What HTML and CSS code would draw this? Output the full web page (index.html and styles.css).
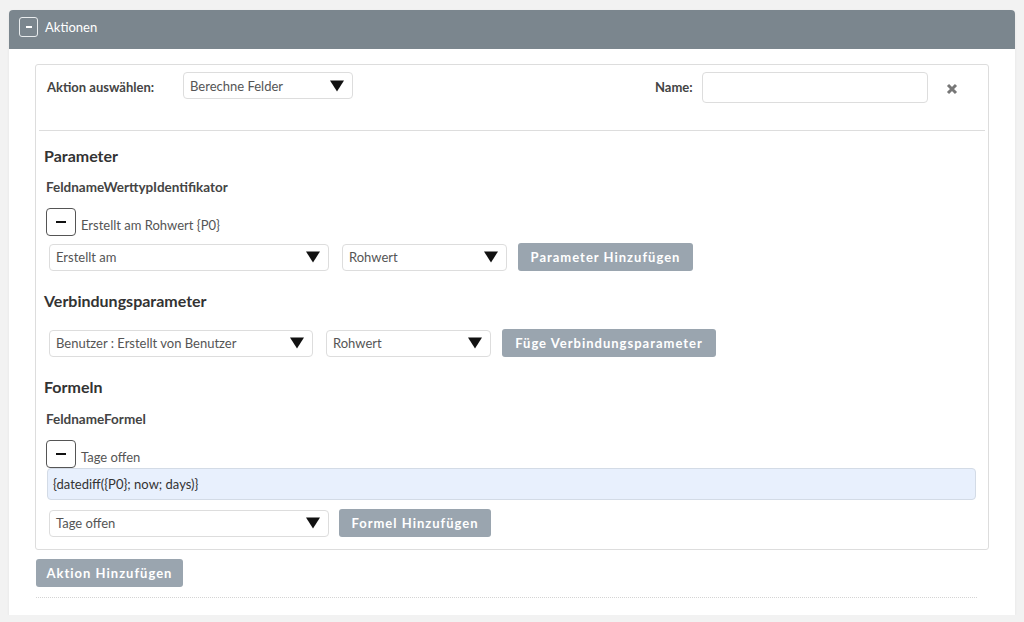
FILE: index.html
```html
<!DOCTYPE html>
<html lang="de">
<head>
<meta charset="utf-8">
<title>Aktionen</title>
<link rel="stylesheet" href="styles.css">
</head>
<body>
<div class="panel">
  <div class="panel-head">
    <span class="toggle"><span class="toggle-bar"></span></span>
    <span class="panel-title">Aktionen</span>
  </div>
  <div class="panel-body">
    <div class="card">
      <div class="toprow">
        <span class="lbl lbl-action">Aktion auswählen:</span>
        <div class="select sel-action"><span>Berechne Felder</span><svg class="arrow" viewBox="0 0 14 11"><path d="M0 0H14L7 11Z"/></svg></div>
        <span class="lbl lbl-name">Name:</span>
        <div class="input-name"></div>
        <svg class="close" viewBox="0 0 12 12"><path d="M2 2L10 10M10 2L2 10"/></svg>
      </div>

      <div class="content">
        <h2 class="heading h-param">Parameter</h2>
        <div class="subhead">FeldnameWerttypIdentifikator</div>
        <div class="minus-row">
          <span class="minus-btn"><span class="minus-bar"></span></span>
          <span class="minus-label">Erstellt am Rohwert {P0}</span>
        </div>
        <div class="field-row row-param">
          <div class="select w280"><span>Erstellt am</span><svg class="arrow" viewBox="0 0 14 11"><path d="M0 0H14L7 11Z"/></svg></div>
          <div class="select w165"><span>Rohwert</span><svg class="arrow" viewBox="0 0 14 11"><path d="M0 0H14L7 11Z"/></svg></div>
          <button class="btn btn-param">Parameter Hinzufügen</button>
        </div>

        <h2 class="heading h-verb">Verbindungsparameter</h2>
        <div class="field-row row-verb">
          <div class="select w264"><span>Benutzer : Erstellt von Benutzer</span><svg class="arrow" viewBox="0 0 14 11"><path d="M0 0H14L7 11Z"/></svg></div>
          <div class="select w165"><span>Rohwert</span><svg class="arrow" viewBox="0 0 14 11"><path d="M0 0H14L7 11Z"/></svg></div>
          <button class="btn btn-verb">Füge Verbindungsparameter</button>
        </div>

        <h2 class="heading h-form">Formeln</h2>
        <div class="subhead sub-form">FeldnameFormel</div>
        <div class="minus-row minus-form">
          <span class="minus-btn"><span class="minus-bar"></span></span>
          <span class="minus-label">Tage offen</span>
        </div>
        <div class="formula">{datediff({P0}; now; days)}</div>
        <div class="field-row row-form">
          <div class="select w280"><span>Tage offen</span><svg class="arrow" viewBox="0 0 14 11"><path d="M0 0H14L7 11Z"/></svg></div>
          <button class="btn btn-form">Formel Hinzufügen</button>
        </div>
      </div>
    </div>
    <button class="btn btn-add">Aktion Hinzufügen</button>
    <div class="dotted"></div>
  </div>
</div>
</body>
</html>
```

FILE: styles.css
```css
* { box-sizing: border-box; }

html, body {
  margin: 0;
  padding: 0;
  background: #f2f2f2;
  font-family: Lato, "Open Sans", "Liberation Sans", sans-serif;
  color: #444;
}

body {
  padding: 10px 9px 0 9px;
}

.panel {
  background: #fff;
  border-radius: 4px 4px 0 0;
  box-shadow: 0 1px 3px rgba(0,0,0,0.06);
  height: 605px;
}

.panel-head {
  height: 39px;
  background: #7b868e;
  border-radius: 4px 4px 0 0;
  display: flex;
  align-items: center;
  padding: 0 0 5px 10px;
}

.toggle {
  width: 19px;
  height: 20px;
  border: 1px solid #e9ecee;
  border-radius: 3px;
  display: flex;
  align-items: center;
  justify-content: center;
}

.toggle-bar {
  width: 6px;
  height: 1.5px;
  background: #fff;
}

.panel-title {
  color: #fff;
  font-size: 13px;
  margin-left: 7px;
}

.panel-body {
  padding: 15px 26px 0 26px;
}

.card {
  border: 1px solid #ddd;
  border-radius: 3px;
  padding: 0 3px 12px 3px;
}

.toprow {
  display: flex;
  align-items: flex-start;
  height: 66px;
  padding: 7px 0 0 8px;
  border-bottom: 1px solid #ddd;
}

.lbl {
  font-size: 13px;
  font-weight: bold;
  color: #444;
  line-height: 31px;
  white-space: nowrap;
}

.lbl-action { width: 136px; }

.lbl-name { margin-left: 302px; width: 47px; }

.select {
  height: 27px;
  border: 1px solid #ddd;
  border-radius: 4px;
  background: #fff;
  display: flex;
  align-items: center;
  justify-content: space-between;
  padding: 0 8px 0 6px;
  font-size: 13px;
  color: #555;
  flex: none;
}

.arrow {
  width: 14px;
  height: 12px;
  fill: #111;
  flex: none;
}

.sel-action { width: 170px; }

.input-name {
  width: 226px;
  height: 31px;
  border: 1px solid #ddd;
  border-radius: 4px;
  background: #fff;
}

.close {
  width: 12px;
  height: 12px;
  margin: 11px 0 0 18px;
  stroke: #777;
  stroke-width: 3;
  stroke-linecap: butt;
  fill: none;
}

.content {
  padding: 0 9px 0 5px;
}

.heading {
  font-size: 16px;
  font-weight: bold;
  color: #333;
  line-height: 20px;
  margin: 0;
}

.h-param { margin-top: 15px; }
.h-verb { margin-top: 20px; }
.h-form { margin-top: 20px; }

.subhead {
  font-size: 13.5px;
  font-weight: bold;
  color: #444;
  line-height: 18px;
  margin: 12px 0 0 2px;
}

.sub-form { margin-top: 13px; }

.minus-row {
  display: flex;
  align-items: flex-end;
  margin: 12px 0 0 2px;
}

.minus-form { margin-top: 12px; }

.minus-btn {
  width: 30px;
  height: 28px;
  border: 1px solid #555;
  border-radius: 4px;
  display: flex;
  align-items: center;
  justify-content: center;
  background: #fff;
}

.minus-bar {
  width: 10px;
  height: 2px;
  background: #111;
}

.minus-label {
  font-size: 13px;
  color: #555;
  margin-left: 5px;
  line-height: 18px;
  position: relative;
  top: -2px;
}

.field-row {
  display: flex;
  align-items: center;
  margin-left: 5px;
}

.row-param { margin-top: 7px; gap: 13px; }
.row-verb { margin-top: 18px; gap: 13px; }
.row-form { margin-top: 9px; gap: 10px; }

.w280 { width: 280px; }
.w264 { width: 264px; }
.w165 { width: 165px; }

.row-param .btn, .row-verb .btn { margin-left: -2px; }

.btn {
  height: 28px;
  border: none;
  border-radius: 3px;
  background: #9aa5af;
  color: #fff;
  font-family: Lato, "Open Sans", "Liberation Sans", sans-serif;
  font-size: 13px;
  font-weight: bold;
  letter-spacing: 1px;
  padding: 0 8px;
  flex: none;
  white-space: nowrap;
}

.btn-param { width: 175px; }
.btn-verb { width: 214px; }
.btn-form { width: 152px; }

.formula {
  margin-left: 3px;
  height: 32px;
  background: #e8f0fd;
  border: 1px solid #d3dbe6;
  border-radius: 4px;
  font-size: 13px;
  color: #333;
  display: flex;
  align-items: center;
  padding-left: 5px;
}

.btn-add {
  margin-top: 9px;
  width: 147px;
  margin-left: 1px;
  display: block;
}

.dotted {
  margin: 10px 12px 0 1px;
  border-bottom: 1px dotted #d4d4d4;
}
```
